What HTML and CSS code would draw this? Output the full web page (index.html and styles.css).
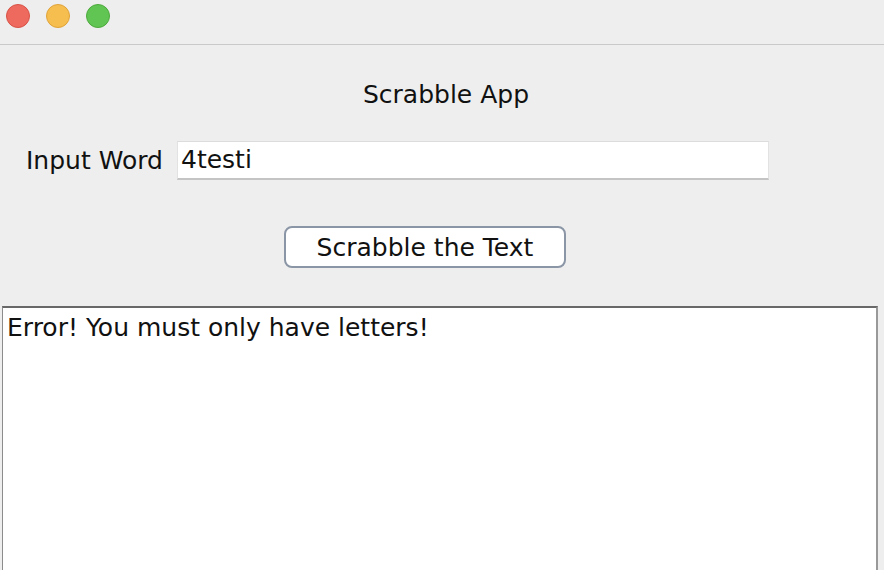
FILE: index.html
```html
<!DOCTYPE html>
<html>
<head>
<meta charset="utf-8">
<link rel="stylesheet" href="styles.css">
</head>
<body>
<div class="window">
  <div class="titlebar">
    <span class="light red"></span>
    <span class="light yellow"></span>
    <span class="light green"></span>
  </div>
  <div class="content">
    <div class="title">Scrabble App</div>
    <div class="input-row">
      <label class="label">Input Word</label>
      <div class="field">4testi</div>
    </div>
    <div class="button-row">
      <button class="btn">Scrabble the Text</button>
    </div>
    <div class="output">Error! You must only have letters!</div>
  </div>
</div>
</body>
</html>
```

FILE: styles.css
```css
html, body {
  margin: 0;
  padding: 0;
  width: 884px;
  height: 570px;
  overflow: hidden;
  background: #eeeeee;
}
.window {
  width: 884px;
  height: 570px;
  display: flex;
  flex-direction: column;
  font-family: "DejaVu Sans", "Liberation Sans", sans-serif;
  color: #111;
}
.titlebar {
  height: 45px;
  box-sizing: border-box;
  border-bottom: 1px solid #c9c9c9;
  background: #eeeeee;
  display: flex;
  align-items: flex-start;
  padding: 4px 0 0 6px;
  gap: 16px;
}
.light {
  width: 24px;
  height: 24px;
  border-radius: 50%;
  box-sizing: border-box;
}
.red { background: #ee6a5e; border: 1px solid #d75347; }
.yellow { background: #f6be4f; border: 1px solid #dfa33a; }
.green { background: #60c553; border: 1px solid #4ea93d; }
.content {
  flex: 1;
  display: flex;
  flex-direction: column;
  background: #eeeeee;
}
.title {
  font-size: 25px;
  text-align: center;
  margin-top: 36px;
  height: 28px;
  line-height: 28px;
  padding-left: 8px;
}
.input-row {
  display: flex;
  align-items: center;
  margin-top: 31px;
  padding-left: 26px;
  height: 40px;
}
.label {
  font-size: 25px;
  width: 151px;
  white-space: nowrap;
}
.field {
  width: 592px;
  height: 39px;
  box-sizing: border-box;
  background: #fff;
  border-top: 1px solid #dcdcdc;
  border-left: 1px solid #e2e2e2;
  border-right: 1px solid #e2e2e2;
  border-bottom: 2px solid #c4c4c4;
  font-size: 25px;
  line-height: 36px;
  padding-left: 3px;
}
.button-row {
  display: flex;
  justify-content: flex-start;
  padding-left: 284px;
  margin-top: 46px;
}
.btn {
  width: 282px;
  height: 42px;
  box-sizing: border-box;
  border: 2px solid #8a95a6;
  border-radius: 8px;
  background: #fff;
  font-family: "DejaVu Sans", "Liberation Sans", sans-serif;
  font-size: 25px;
  color: #111;
  padding: 0;
}
.output {
  margin-top: 38px;
  margin-left: 2px;
  width: 876px;
  flex: 1;
  box-sizing: border-box;
  background: #fff;
  border-top: 2px solid #686868;
  border-left: 1px solid #8c8c8c;
  border-right: 2px solid #999999;
  font-size: 25px;
  line-height: 30px;
  padding: 5px 4px;
}
```
